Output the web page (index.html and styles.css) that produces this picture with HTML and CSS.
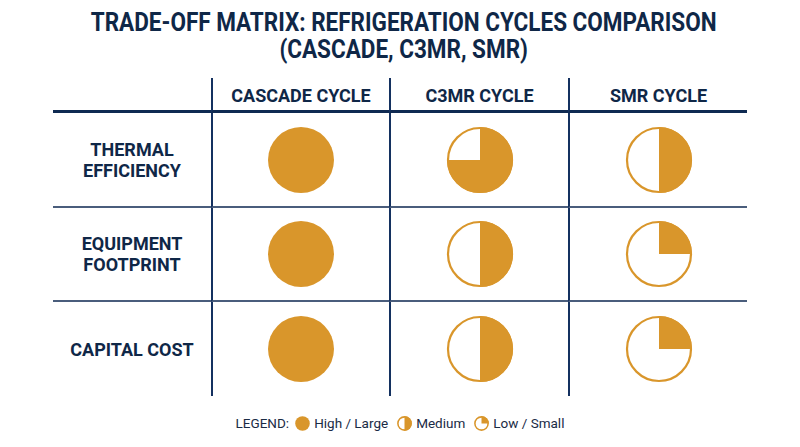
FILE: index.html
```html
<!DOCTYPE html>
<html>
<head>
<meta charset="utf-8">
<link rel="stylesheet" href="styles.css">
</head>
<body>
<div class="page">
  <h1 class="title"><span>TRADE-OFF MATRIX: REFRIGERATION CYCLES COMPARISON</span><span>(CASCADE, C3MR, SMR)</span></h1>
  <div class="matrix">
    <div class="hcell corner"></div>
    <div class="hcell col"><span>CASCADE CYCLE</span></div>
    <div class="hcell col"><span>C3MR CYCLE</span></div>
    <div class="hcell col"><span>SMR CYCLE</span></div>

    <div class="label">THERMAL<br>EFFICIENCY</div>
    <div class="cell"><svg class="pie" viewBox="0 0 68 68"><circle cx="34" cy="34" r="33" class="full"/></svg></div>
    <div class="cell"><svg class="pie" viewBox="0 0 68 68"><circle cx="34" cy="34" r="32" class="ring"/><path d="M34 34 L34 1 A33 33 0 1 1 1 34 Z" class="fill"/></svg></div>
    <div class="cell"><svg class="pie" viewBox="0 0 68 68"><circle cx="34" cy="34" r="32" class="ring"/><path d="M34 1 A33 33 0 0 1 34 67 Z" class="fill"/></svg></div>

    <div class="label">EQUIPMENT<br>FOOTPRINT</div>
    <div class="cell"><svg class="pie" viewBox="0 0 68 68"><circle cx="34" cy="34" r="33" class="full"/></svg></div>
    <div class="cell"><svg class="pie" viewBox="0 0 68 68"><circle cx="34" cy="34" r="32" class="ring"/><path d="M34 1 A33 33 0 0 1 34 67 Z" class="fill"/></svg></div>
    <div class="cell"><svg class="pie" viewBox="0 0 68 68"><circle cx="34" cy="34" r="32" class="ring"/><path d="M34 34 L34 1 A33 33 0 0 1 67 34 Z" class="fill"/></svg></div>

    <div class="label last">CAPITAL COST</div>
    <div class="cell last"><svg class="pie" viewBox="0 0 68 68"><circle cx="34" cy="34" r="33" class="full"/></svg></div>
    <div class="cell last"><svg class="pie" viewBox="0 0 68 68"><circle cx="34" cy="34" r="32" class="ring"/><path d="M34 1 A33 33 0 0 1 34 67 Z" class="fill"/></svg></div>
    <div class="cell last"><svg class="pie" viewBox="0 0 68 68"><circle cx="34" cy="34" r="32" class="ring"/><path d="M34 34 L34 1 A33 33 0 0 1 67 34 Z" class="fill"/></svg></div>
  </div>
  <div class="legend">
    <span class="lg-title">LEGEND:</span>
    <svg class="mini" viewBox="0 0 68 68"><circle cx="34" cy="34" r="33" class="full"/></svg>
    <span class="lg-text">High / Large</span>
    <svg class="mini" viewBox="0 0 68 68"><circle cx="34" cy="34" r="30" class="ring thick"/><path d="M34 1 A33 33 0 0 1 34 67 Z" class="fill"/></svg>
    <span class="lg-text">Medium</span>
    <svg class="mini" viewBox="0 0 68 68"><circle cx="34" cy="34" r="30" class="ring thick"/><path d="M34 34 L34 1 A33 33 0 0 1 67 34 Z" class="fill"/></svg>
    <span class="lg-text">Low / Small</span>
  </div>
</div>
</body>
</html>
```

FILE: styles.css
```css
html, body {
  margin: 0;
  padding: 0;
  background: #ffffff;
}
body {
  width: 800px;
  height: 447px;
  overflow: hidden;
  font-family: Roboto, "Liberation Sans", sans-serif;
  color: #0f2747;
}
.page {
  display: flex;
  flex-direction: column;
  align-items: center;
}
.title {
  margin: 9px 0 0 8px;
  display: flex;
  flex-direction: column;
  align-items: center;
  font-size: 25px;
  font-weight: 700;
  line-height: 27px;
  color: #0f2747;
  transform: scaleX(0.9);
  white-space: nowrap;
}
.matrix {
  margin-top: 15px;
  width: 694px;
  display: grid;
  grid-template-columns: 158px 178px 179px 179px;
  grid-template-rows: 35px 95px 94px 94px;
}
.hcell {
  border-bottom: 3px solid #0f2a52;
  display: flex;
  align-items: center;
  justify-content: center;
  font-size: 18px;
  font-weight: 700;
}
.hcell span {
  display: inline-block;
  white-space: nowrap;
  margin-top: 2px;
}
.col, .cell {
  border-left: 2px solid #143160;
}
.label {
  display: flex;
  align-items: center;
  justify-content: center;
  text-align: center;
  font-size: 18px;
  font-weight: 700;
  line-height: 21px;
  border-bottom: 2px solid #4a5d7c;
}
.cell {
  display: flex;
  align-items: center;
  justify-content: center;
  border-bottom: 2px solid #4a5d7c;
}
.label.last, .cell.last {
  border-bottom: none;
}
.pie {
  width: 68px;
  height: 68px;
  display: block;
}
.full {
  fill: #d9962b;
}
.ring {
  fill: #ffffff;
  stroke: #d9962b;
  stroke-width: 2.2;
}
.ring.thick {
  stroke-width: 7;
}
.fill {
  fill: #d9962b;
}
.legend {
  margin-top: 19px;
  display: flex;
  align-items: center;
  font-size: 13.5px;
  color: #1a2b45;
}
.lg-title {
  margin-right: 6px;
}
.mini {
  width: 15px;
  height: 15px;
  margin-right: 4px;
  display: block;
}
.lg-text {
  margin-right: 9px;
}
.lg-text:last-child {
  margin-right: 0;
}
```
